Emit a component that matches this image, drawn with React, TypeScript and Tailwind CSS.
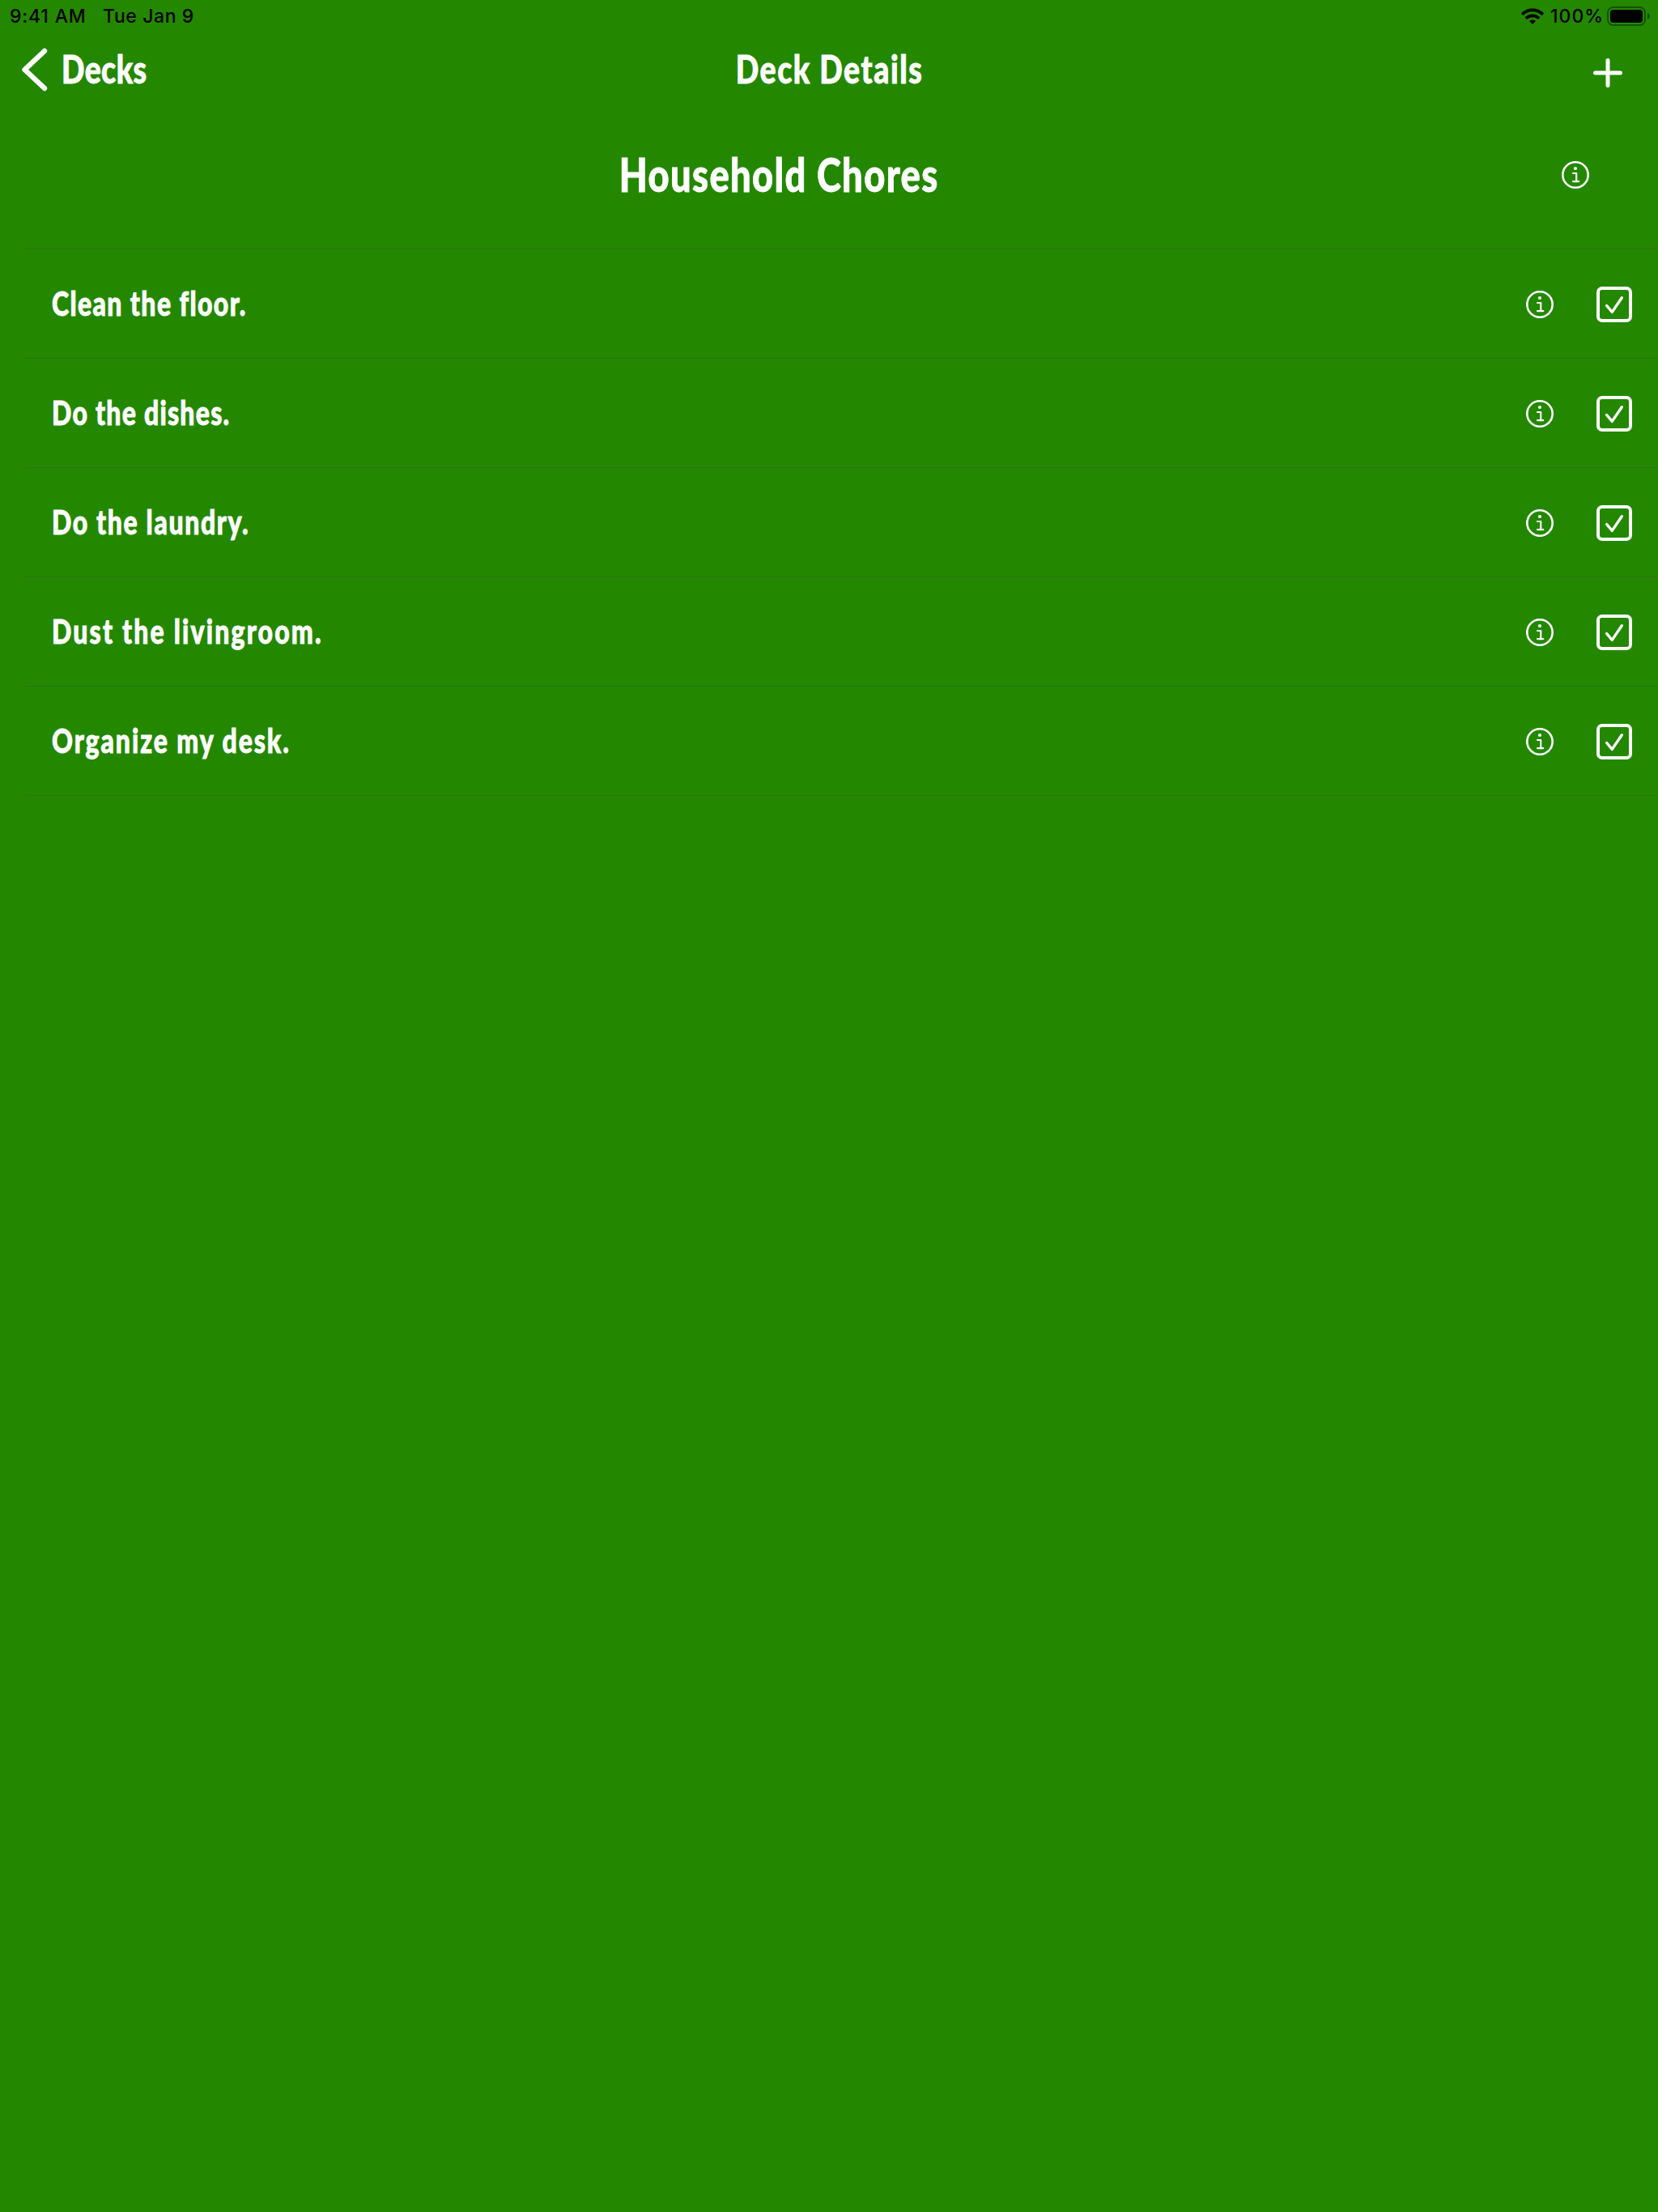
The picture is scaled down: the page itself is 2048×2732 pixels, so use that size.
import React from "react";

const chores = [
  { text: "Clean the floor.", spacing: "tracking-[1.8px]" },
  { text: "Do the dishes.", spacing: "tracking-[1.6px]" },
  { text: "Do the laundry.", spacing: "tracking-[2.1px]" },
  { text: "Dust the livingroom.", spacing: "tracking-[2.8px]" },
  { text: "Organize my desk.", spacing: "tracking-[2.5px]" },
];

function InfoIcon() {
  return (
    <svg width="34" height="34" viewBox="0 0 34 34" fill="none" stroke="white" className="block">
      <circle cx="17" cy="17" r="15.7" strokeWidth="2.6" />
      <circle cx="17" cy="9" r="2.1" fill="white" stroke="none" />
      <path d="M14 15h4.2v10M14 25.1h7.2" strokeWidth="2.2" strokeLinecap="round" strokeLinejoin="round" />
    </svg>
  );
}

function CheckBox() {
  return (
    <span className="block size-11 rounded-[7px] border-4 border-white">
      <svg width="36" height="36" viewBox="4 4 36 36" fill="none" className="block">
        <path d="M12.6 23.5l6.7 7.9L31.3 13.7" stroke="white" strokeWidth="3.4" strokeLinecap="round" strokeLinejoin="round" />
      </svg>
    </span>
  );
}

function StatusBar() {
  return (
    <div className="flex h-10 items-center justify-between pl-3 pr-[10px] font-[Inter,sans-serif] text-[23px] leading-10 font-medium text-black">
      <div className="flex whitespace-pre">
        <span className="w-[115px] tracking-[0.8px]">9:41 AM</span>
        <span className="tracking-[0.6px]">Tue Jan 9</span>
      </div>
      <div className="flex items-center">
        <svg width="28" height="22" viewBox="0 0 28 22" fill="none" stroke="black" strokeWidth="3.7" className="mr-[8px] block">
          <path d="M1.2 8.9A17.8 17.8 0 0 1 26.8 8.9" />
          <path d="M5.9 13.7A11.4 11.4 0 0 1 22.1 13.7" />
          <path d="M14 21l-4-3.9a5.7 5.7 0 0 1 8 0z" fill="black" stroke="none" />
        </svg>
        <span className="w-[70px] tracking-[1px]">100%</span>
        <svg width="53" height="24" viewBox="0 0 53 24" className="block">
          <rect x="1" y="1" width="46" height="22" rx="6.5" fill="none" stroke="black" strokeOpacity="0.4" strokeWidth="2" />
          <rect x="4" y="4" width="40" height="16" rx="4" fill="black" />
          <path d="M50 8c4 1.5 4 6.5 0 8z" fill="black" fillOpacity="0.4" />
        </svg>
      </div>
    </div>
  );
}

export default function App() {
  return (
    <div className="min-h-[2732px] w-[2048px] bg-[#238800] font-[Lato,sans-serif] font-black text-white">
      <StatusBar />
      <header className="grid h-[92px] grid-cols-3 items-center [-webkit-text-stroke:0.9px_white]">
        <button className="flex h-[92px] items-center pl-6 text-left">
          <svg width="38" height="60" viewBox="0 0 38 60" fill="none" className="block">
            <path d="M31 7L6.5 30L31 53" stroke="white" strokeWidth="6.4" strokeLinecap="round" strokeLinejoin="round" />
          </svg>
          <span className="mb-[3px] ml-3.5 origin-left scale-x-[0.78] text-5xl leading-none tracking-[0.5px]">Decks</span>
        </button>
        <h1 className="flex justify-center pb-[3px] pl-0.5 text-5xl leading-none">
          <span className="scale-x-[0.78] whitespace-nowrap tracking-[2px]">Deck Details</span>
        </h1>
        <div className="flex justify-end pr-11 pt-2">
          <svg width="36" height="36" viewBox="0 0 36 36" className="block">
            <path d="M18 2.5v31M2.5 18h31" stroke="white" strokeWidth="5" strokeLinecap="round" />
          </svg>
        </div>
      </header>
      <main className="pl-8 [-webkit-text-stroke:0.9px_white]">
        <section className="flex h-44 items-center border-b border-[#2d7314] pb-[7px]">
          <h2 className="flex w-[1861px] justify-center pb-[3px] text-[58px] leading-none">
            <span className="scale-x-[0.78] whitespace-nowrap tracking-[1.8px]">Household Chores</span>
          </h2>
          <span className="ml-9">
            <InfoIcon />
          </span>
        </section>
        <ul>
          {chores.map(({ text, spacing }) => (
            <li key={text} className="flex h-[135px] items-center border-b border-[#2d7314] pl-8 pr-8 pt-0.5">
              <div className="flex-1 pb-[3px] text-[41px] leading-none">
                <span className={"block w-fit origin-left scale-x-[0.78] whitespace-nowrap " + spacing}>{text}</span>
              </div>
              <span className="mr-[53px]">
                <InfoIcon />
              </span>
              <CheckBox />
            </li>
          ))}
        </ul>
      </main>
    </div>
  );
}
